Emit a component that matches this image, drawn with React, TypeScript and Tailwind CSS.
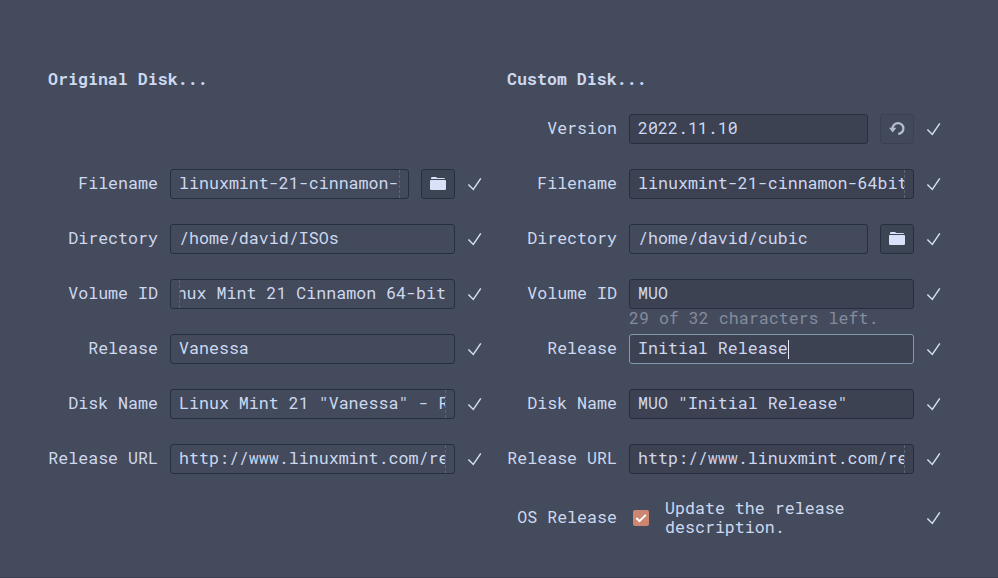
import React from 'react';
import { clsx } from 'clsx';

type Side = 'start' | 'end';

function Check() {
  return (
    <svg className="ml-3 h-4 w-4 shrink-0" viewBox="0 0 16 16" fill="none" stroke="#d3dcf2" strokeWidth="1.5">
      <path d="M1.4 8.4 6.3 13.4 13.8 2.4" />
    </svg>
  );
}

function Folder() {
  return (
    <svg className="h-4 w-4" viewBox="0 0 16 16" fill="#d8e1f8">
      <path d="M1 3V2.2Q1 1 2.2 1H6L7.4 2H13.8Q15 2 15 3Z" />
      <path d="M0 4.8Q0 4 .8 4H15.2Q16 4 16 4.8V12.8Q16 14 14.8 14H1.2Q0 14 0 12.8Z" />
    </svg>
  );
}

function Undo() {
  return (
    <svg className="h-4 w-4" viewBox="0 0 16 16" fill="none">
      <path d="M3.6 8A5.4 5.4 0 1 1 9.2 12.9" stroke="#b3bbd0" strokeWidth="2.3" />
      <path d="M0 6.8H7.4L3.7 11.4Z" fill="#b3bbd0" />
    </svg>
  );
}

interface FieldProps {
  label: string;
  value: string;
  filled?: boolean;
  focused?: boolean;
  cut?: Side;
  button?: 'folder' | 'undo';
}

function Field({ label, value, filled, focused, cut, button }: FieldProps) {
  return (
    <div className="flex h-[30px] items-center">
      <label className="mr-3 w-[110px] shrink-0 whitespace-nowrap pb-0.5 text-right">{label}</label>
      <div
        className={clsx(
          'flex h-[30px] items-center rounded-[3px] border px-2',
          button ? 'w-[239px]' : 'w-[285px]',
          filled ? 'bg-[#3c4252]' : 'bg-[#434a5c]',
          focused ? 'border-[#7d9bac]' : 'border-[#262e41]',
        )}
      >
        <div
          className={clsx(
            'flex h-[28px] w-full items-center overflow-hidden whitespace-pre',
            cut === 'end' && 'border-r border-dashed border-[#5d6579]',
            cut === 'start' && 'justify-end border-l border-dashed border-[#5d6579]',
          )}
        >
          <span className="shrink-0 pb-0.5">{value}</span>
          {focused && <span className="h-[19px] w-px shrink-0 bg-[#e4ebfb]" />}
        </div>
      </div>
      {button && (
        <button
          className={clsx(
            'ml-3 flex h-[30px] w-[34px] items-center justify-center rounded-[3px] border',
            button === 'folder' ? 'border-[#262e41] bg-[#3d4454]' : 'border-[#3a4153] bg-[#42495a]',
          )}
        >
          {button === 'folder' ? <Folder /> : <Undo />}
        </button>
      )}
      <Check />
    </div>
  );
}

export default function App() {
  return (
    <main className="flex h-[578px] w-[998px] gap-[23px] overflow-hidden border-b border-[#3a4152] bg-[#444b5d] pl-12 pt-[69px] font-['Roboto_Mono','DejaVu_Sans_Mono',monospace] text-[16.64px] leading-[19px] text-[#ced8ef]">
      <section className="w-[436px]">
        <h2 className="h-[100px] font-bold leading-[21px]">Original Disk...</h2>
        <div className="flex flex-col gap-[25px]">
          <Field label="Filename" value="linuxmint-21-cinnamon-64bit.iso" cut="end" button="folder" />
          <Field label="Directory" value="/home/david/ISOs" />
          <Field label="Volume ID" value="Linux Mint 21 Cinnamon 64-bit" cut="start" />
          <Field label="Release" value="Vanessa" />
          <Field label="Disk Name" value={'Linux Mint 21 "Vanessa" - Release'} cut="end" />
          <Field label="Release URL" value="http://www.linuxmint.com/rel_vanessa" cut="end" />
        </div>
      </section>
      <section className="w-[436px]">
        <h2 className="h-[45px] font-bold leading-[21px]">Custom Disk...</h2>
        <div className="flex flex-col gap-[25px]">
          <Field label="Version" value="2022.11.10" filled button="undo" />
          <Field label="Filename" value="linuxmint-21-cinnamon-64bit.iso" filled cut="end" />
          <Field label="Directory" value="/home/david/cubic" button="folder" />
          <div>
            <Field label="Volume ID" value="MUO" filled />
            <p className="h-[25px] pl-[122px] text-[#848b9c]">29 of 32 characters left.</p>
            <Field label="Release" value="Initial Release" filled focused />
          </div>
          <Field label="Disk Name" value={'MUO "Initial Release"'} filled />
          <Field label="Release URL" value="http://www.linuxmint.com/rel_vanessa" filled cut="end" />
          <div className="flex h-[38px] items-center">
            <span className="mr-4 w-[110px] shrink-0 pb-0.5 text-right">OS Release</span>
            <span className="flex h-4 w-4 items-center justify-center rounded-[2px] bg-[#cd8770]">
              <svg className="h-4 w-4" viewBox="0 0 16 16" fill="none" stroke="#fff" strokeWidth="2">
                <path d="M3.3 8 6.5 11.2 12.8 4.9" />
              </svg>
            </span>
            <p className="ml-4 w-[249px]">
              Update the release
              <br />
              description.
            </p>
            <Check />
          </div>
        </div>
      </section>
    </main>
  );
}
